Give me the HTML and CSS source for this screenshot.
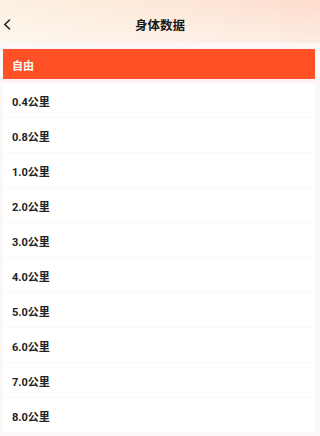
FILE: index.html
```html
<!DOCTYPE html>
<html lang="zh">
<head>
<meta charset="utf-8">
<title>身体数据</title>
<link rel="stylesheet" href="styles.css">
</head>
<body>
<header class="topbar">
  <span class="back">
    <svg width="8" height="11" viewBox="0 0 8 11"><path d="M6.5 1 L1.8 5.5 L6.5 10" fill="none" stroke="#222" stroke-width="1.6" stroke-linecap="round" stroke-linejoin="round"/></svg>
  </span>
  <h1 class="title">身体数据</h1>
</header>
<ul class="list">
  <li class="item selected"><span class="fill">自由</span></li>
  <li class="item">0.4公里</li>
  <li class="item">0.8公里</li>
  <li class="item">1.0公里</li>
  <li class="item">2.0公里</li>
  <li class="item">3.0公里</li>
  <li class="item">4.0公里</li>
  <li class="item">5.0公里</li>
  <li class="item">6.0公里</li>
  <li class="item">7.0公里</li>
  <li class="item">8.0公里</li>
</ul>
</body>
</html>
```
FILE: styles.css
```css
* { box-sizing: border-box; }
html { background: #fcf8f8; }
html, body { margin: 0; padding: 0; }
body {
  height: 436px;
  overflow: hidden;
  background: #fcf8f8;
  font-family: Roboto, "Noto Sans CJK SC", sans-serif;
  color: #222;
}
.topbar {
  height: 43px;
  position: relative;
  display: flex;
  align-items: center;
  justify-content: center;
  padding-top: 9px;
  background:
    linear-gradient(180deg, rgba(255,255,255,0) 0%, rgba(255,255,255,0.45) 100%),
    linear-gradient(90deg, #fcf0e0 0%, #fde6d6 60%, #fddccc 100%);
}
.back {
  position: absolute;
  left: 3px;
  top: 19px;
  width: 8px;
  height: 11px;
  display: flex;
}
.title {
  margin: 0;
  font-size: 12.5px;
  font-weight: 700;
  line-height: 16px;
  color: #1a1a1a;
}
.list {
  list-style: none;
  margin: 5px 0 0;
  padding: 0 5px 0 3px;
}
.item {
  height: 34px;
  margin-bottom: 1px;
  background: #fff;
  display: flex;
  align-items: center;
  padding-left: 9px;
  padding-top: 2px;
  font-size: 11px;
  font-weight: 700;
  color: #222;
}
.item.selected {
  padding: 0;
  align-items: flex-start;
  background: #fdf2f0;
}
.fill {
  margin-top: 1px;
  width: 100%;
  height: 30px;
  background: #ff5026;
  color: #fff;
  display: flex;
  align-items: center;
  padding-left: 9px;
  padding-top: 1px;
}
```
